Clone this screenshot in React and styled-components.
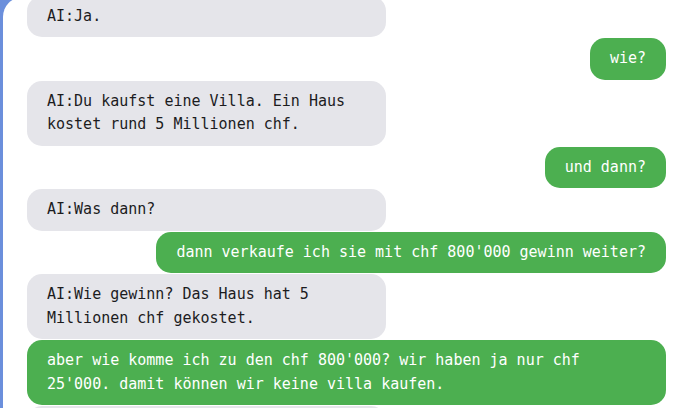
import React from 'react';
import styled, { createGlobalStyle } from 'styled-components';

const GlobalStyle = createGlobalStyle`
  html, body {
    margin: 0;
    padding: 0;
    height: 100%;
    overflow: hidden;
    background: #6b8fdc;
  }
`;

const Frame = styled.div`
  height: 100vh;
  padding-left: 3px;
  background: #6b8fdc;
  overflow: hidden;
`;

const Panel = styled.div`
  margin-top: -3px;
  height: calc(100vh + 3px);
  background: #ffffff;
  border-top-left-radius: 20px;
  overflow: hidden;
`;

const ChatList = styled.div`
  display: flex;
  flex-direction: column;
  gap: 1px;
  margin-top: -1.5px;
  padding: 0 14px 0 24px;
`;

const Bubble = styled.div`
  box-sizing: border-box;
  padding: 9px 20px;
  border-radius: 15px;
  font-family: "DejaVu Sans Mono", "Liberation Mono", monospace;
  font-size: 15px;
  line-height: 23.5px;
  white-space: pre-wrap;
  align-self: ${(p) => (p.$mine ? 'flex-end' : 'flex-start')};
  background: ${(p) => (p.$mine ? '#4caf50' : '#e5e5ea')};
  color: ${(p) => (p.$mine ? '#ffffff' : '#1c1c1e')};
  width: ${(p) => (p.$mine ? 'auto' : '359px')};
  max-width: 100%;
`;

const messages = [
  { mine: false, text: 'AI:Ja.' },
  { mine: true, text: 'wie?' },
  { mine: false, text: 'AI:Du kaufst eine Villa. Ein Haus kostet rund 5 Millionen chf.' },
  { mine: true, text: 'und dann?' },
  { mine: false, text: 'AI:Was dann?' },
  { mine: true, text: "dann verkaufe ich sie mit chf 800'000 gewinn weiter?" },
  { mine: false, text: 'AI:Wie gewinn? Das Haus hat 5 Millionen chf gekostet.' },
  { mine: true, text: "aber wie komme ich zu den chf 800'000? wir haben ja nur chf 25'000. damit können wir keine villa kaufen." },
  { mine: false, text: 'AI:Das stimmt. Mit 25\'000 chf geht das nicht.' },
];

export default function App() {
  return (
    <>
      <GlobalStyle />
      <Frame>
        <Panel>
          <ChatList>
            {messages.map((m, i) => (
              <Bubble key={i} $mine={m.mine}>
                {m.text}
              </Bubble>
            ))}
          </ChatList>
        </Panel>
      </Frame>
    </>
  );
}
